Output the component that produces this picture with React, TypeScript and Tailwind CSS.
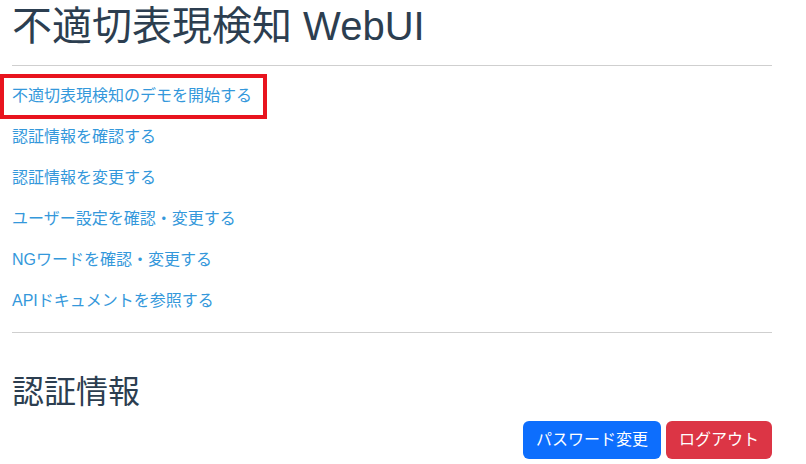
const links = [
    "不適切表現検知のデモを開始する",
    "認証情報を確認する",
    "認証情報を変更する",
    "ユーザー設定を確認・変更する",
    "NGワードを確認・変更する",
    "APIドキュメントを参照する",
];

export default function App() {
    return (
        <div
            className="min-h-[464px] bg-white pl-3 pr-[34px] text-[#2c3e50]"
            style={{ fontFamily: '"Liberation Sans", "Noto Sans CJK JP", sans-serif' }}
        >
            <h1 className="pt-[2px] text-[40px] leading-[48px]">不適切表現検知 WebUI</h1>
            <hr className="mt-[15px] border-t border-[#cfcfcf]" />
            <div className="mt-[9px] flex flex-col">
                {links.map((label, i) => (
                    <div key={label} className="relative flex h-[41px] items-center">
                        {i === 0 && (
                            <div className="absolute -left-3 -top-[1px] h-[45px] w-[267px] border-4 border-[#e8141e]" />
                        )}
                        <a href="#" className="relative text-[16px] leading-6 text-[#3498db]">
                            {label}
                        </a>
                    </div>
                ))}
            </div>
            <hr className="mt-[11px] border-t border-[#cfcfcf]" />
            <h2 className="mt-[40px] text-[32px] leading-[38px]">認証情報</h2>
            <div className="mt-[10px] flex justify-end gap-[5px]">
                <button className="h-[38px] rounded-md bg-[#0d6efd] px-[13px] text-[16px] text-white">
                    パスワード変更
                </button>
                <button className="h-[38px] rounded-md bg-[#dc3545] px-[13px] text-[16px] text-white">
                    ログアウト
                </button>
            </div>
        </div>
    );
}
